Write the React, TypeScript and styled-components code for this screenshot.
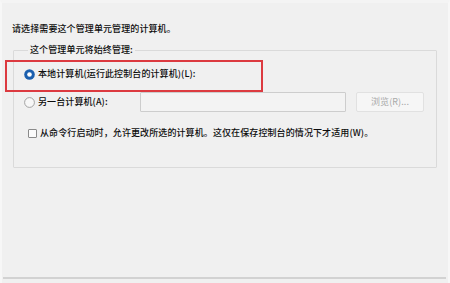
import React from "react";
import styled, { createGlobalStyle } from "styled-components";

const Global = createGlobalStyle`
  html, body { margin: 0; padding: 0; background: #f0f0f0; }
  * { box-sizing: border-box; }
`;

const Page = styled.div`
  position: relative;
  width: 450px;
  height: 283px;
  background: #f0f0f0;
  display: flex;
  flex-direction: column;
  font-family: "Noto Sans CJK SC", "Microsoft YaHei", sans-serif;
  font-size: 9px;
  font-weight: 500;
  letter-spacing: 0.1px;
  color: #0d0d0d;
  border-top: 3px solid #f4f4f4;
  border-left: 2px solid #f7f7f7;
  border-right: 2px solid #f7f7f7;
  overflow: hidden;
`;

const Prompt = styled.div`
  margin: 20px 0 0 10px;
  line-height: 12px;
  height: 12px;
`;

const Group = styled.fieldset`
  margin: 9px 0 0 11px;
  width: 424px;
  padding: 11px 10px 27px 10px;
  border: 1px solid #dadada;
  border-radius: 1px;
  display: flex;
  flex-direction: column;
`;

const Legend = styled.legend`
  padding: 0 2px;
  margin-left: 4px;
  line-height: 12px;
`;

const Row = styled.div<{ $h: number; $mt?: number }>`
  display: flex;
  align-items: center;
  height: ${(p) => p.$h}px;
  margin-top: ${(p) => p.$mt ?? 0}px;
`;

const Label = styled.span<{ $w?: number }>`
  margin-left: 3px;
  line-height: 12px;
  white-space: nowrap;
  ${(p) => (p.$w ? `width: ${p.$w}px;` : "")}
`;

const TextBox = styled.div`
  width: 206px;
  height: 20px;
  border: 1px solid #cdcdcd;
  background: #f3f3f3;
  border-radius: 1px;
`;

const Button = styled.div`
  margin-left: 10px;
  width: 68px;
  height: 20px;
  border: 1px solid #e1e1e1;
  background: #f6f6f6;
  border-radius: 2px;
  color: #a8a8a8;
  font-weight: 400;
  display: flex;
  align-items: center;
  justify-content: center;
  line-height: 12px;
`;

const Check = styled.span`
  width: 9px;
  height: 9px;
  margin-left: 4px;
  border: 1px solid #8a8a8a;
  border-radius: 1px;
  background: #fbfbfb;
  flex: none;
`;

const Spacer = styled.div`
  flex: 1;
`;

const Footer = styled.div`
  height: 2px;
  margin: 0 2px 4px 1px;
  background: #d2d2d2;
`;

const Highlight = styled.div`
  position: absolute;
  left: 3px;
  top: 57px;
  width: 258px;
  height: 32px;
  border: 2px solid #dc3a40;
  pointer-events: none;
`;

const Radio = ({ checked }: { checked?: boolean }) => (
  <svg width="11" height="11" viewBox="0 0 11 11" style={{ flex: "none" }}>
    {checked ? (
      <>
        <circle cx="5.5" cy="5.5" r="5.3" fill="#1b5fae" />
        <circle cx="5.5" cy="5.5" r="2.3" fill="#ffffff" />
      </>
    ) : (
      <circle cx="5.5" cy="5.5" r="4.9" fill="#f7f7f7" stroke="#9a9a9a" strokeWidth="0.9" />
    )}
  </svg>
);

export default function App() {
  return (
    <>
      <Global />
      <Page>
        <Prompt>请选择需要这个管理单元管理的计算机。</Prompt>
        <Group>
          <Legend>这个管理单元将始终管理:</Legend>
          <Row $h={14}>
            <Radio checked />
            <Label>本地计算机(运行此控制台的计算机)(L):</Label>
          </Row>
          <Row $h={20} $mt={11}>
            <Radio />
            <Label $w={102}>另一台计算机(A):</Label>
            <TextBox />
            <Button>浏览(R)...</Button>
          </Row>
          <Row $h={14} $mt={14}>
            <Check />
            <Label>从命令行启动时，允许更改所选的计算机。这仅在保存控制台的情况下才适用(W)。</Label>
          </Row>
        </Group>
        <Spacer />
        <Footer />
        <Highlight />
      </Page>
    </>
  );
}
